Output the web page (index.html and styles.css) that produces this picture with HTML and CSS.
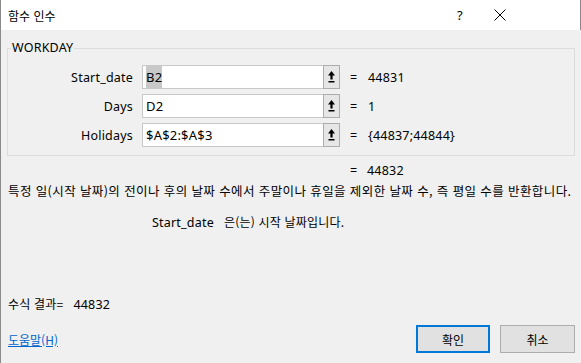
FILE: index.html
```html
<!DOCTYPE html>
<html lang="ko">
  <head>
    <meta charset="UTF-8">
    <title>함수 인수</title>
    <link rel="stylesheet" href="styles.css">
  </head>
  <body>
<div class="dialog">
  <div class="titlebar">
    <span class="title">함수 인수</span>
    <span class="help">?</span>
    <span class="close">
      <svg width="12" height="12" viewBox="0 0 12 12">
        <path d="M0.5 0.5 L11.5 11.5 M11.5 0.5 L0.5 11.5" stroke="#000" stroke-width="1" fill="none" />
      </svg>
    </span>
  </div>

  <div class="content">
    <fieldset class="group">
      <legend>WORKDAY</legend>
      <div class="args">
        <label>Start_date</label>
        <div class="field"><span class="sel">B2</span></div>
        <button class="collapse" type="button">
          <svg width="7" height="12" viewBox="0 0 7 12"><path d="M3.5 0 L7 4.5 L4.6 4.5 L4.6 8.5 L2.4 8.5 L2.4 4.5 L0 4.5 Z M0.5 10 L6.5 10 L6.5 11.5 L0.5 11.5 Z" fill="#000" /></svg>
        </button>
        <span class="eq">=</span>
        <span class="val">44831</span>

        <label>Days</label>
        <div class="field">D2</div>
        <button class="collapse" type="button">
          <svg width="7" height="12" viewBox="0 0 7 12"><path d="M3.5 0 L7 4.5 L4.6 4.5 L4.6 8.5 L2.4 8.5 L2.4 4.5 L0 4.5 Z M0.5 10 L6.5 10 L6.5 11.5 L0.5 11.5 Z" fill="#000" /></svg>
        </button>
        <span class="eq">=</span>
        <span class="val">1</span>

        <label>Holidays</label>
        <div class="field">$A$2:$A$3</div>
        <button class="collapse" type="button">
          <svg width="7" height="12" viewBox="0 0 7 12"><path d="M3.5 0 L7 4.5 L4.6 4.5 L4.6 8.5 L2.4 8.5 L2.4 4.5 L0 4.5 Z M0.5 10 L6.5 10 L6.5 11.5 L0.5 11.5 Z" fill="#000" /></svg>
        </button>
        <span class="eq">=</span>
        <span class="val">{44837;44844}</span>
      </div>
    </fieldset>

    <div class="result"><span class="eq">=</span><span class="val">44832</span></div>
    <p class="desc">특정 일(시작 날짜)의 전이나 후의 날짜 수에서 주말이나 휴일을 제외한 날짜 수, 즉 평일 수를 반환합니다.</p>
    <p class="argdesc"><span class="argname">Start_date</span>은(는) 시작 날짜입니다.</p>

    <div class="formula">수식 결과=<span class="formula-val">44832</span></div>

    <div class="footer">
      <a href="#" class="help-link">도움말(H)</a>
      <div class="buttons">
        <button class="btn ok" type="button">확인</button>
        <button class="btn" type="button">취소</button>
      </div>
    </div>
  </div>
</div>
  </body>
</html>
```

FILE: styles.css
```css
body {
  margin: 0;
  width: 581px;
  height: 363px;
  overflow: hidden;
  font: 12.5px "Noto Sans", "Noto Sans CJK KR", sans-serif;
  letter-spacing: 0.2px;
  color: #000;
  background: #f0f0f0;
}

.dialog {
  height: 363px;
  border-left: 1px solid #8a8a8a;
  display: flex;
  flex-direction: column;
}

.titlebar {
  height: 30px;
  background: #fff;
  display: flex;
  align-items: center;
  border-right: 1px solid #8a8a8a;
}
.title {
  margin-left: 7px;
  flex: 1;
  font-family: "Noto Sans CJK KR", sans-serif;
  font-size: 12px;
  letter-spacing: 0;
}
.help {
  width: 20px;
  margin-right: 24px;
  font-size: 13px;
  text-align: center;
}
.close {
  width: 12px;
  height: 12px;
  margin-right: 74px;
  display: flex;
}

.content {
  flex: 1;
  padding: 0 6px;
  display: flex;
  flex-direction: column;
}

.group {
  margin: 10px 0 0 0;
  padding: 9px 0 8px 0;
  border: 1px solid #dcdcdc;
  min-width: 0;
}
.group legend {
  padding: 0 1px;
  margin-left: 3px;
  line-height: 16px;
}

.args {
  display: grid;
  grid-template-columns: 134px 181px 17px 28px auto;
  grid-auto-rows: 24px;
  row-gap: 5px;
  align-items: center;
}
.args label {
  text-align: right;
  padding-right: 9px;
}
.field {
  height: 24px;
  box-sizing: border-box;
  background: #fff;
  border: 1px solid #c8c8c8;
  border-right: none;
  padding: 0 0 0 3px;
  line-height: 22px;
  font-size: 13px;
}
.sel {
  background: #c8c8c8;
  padding: 2px 0;
}
.collapse {
  height: 24px;
  width: 17px;
  padding: 0;
  margin: 0;
  box-sizing: border-box;
  background: #e6e6e6;
  border: 1px solid #adadad;
  display: flex;
  align-items: center;
  justify-content: center;
}
.eq {
  padding-left: 10px;
}

.result {
  margin-top: 6px;
  padding-left: 343px;
  display: flex;
}
.result .eq {
  width: 17px;
  padding-left: 0;
}

.desc {
  margin: 2px 0 0 1px;
  font-family: "Noto Sans CJK KR", sans-serif;
  font-size: 12.5px;
  letter-spacing: 0.4px;
  white-space: nowrap;
}

.argdesc {
  margin: 13px 0 0 145px;
  font-family: "Noto Sans CJK KR", sans-serif;
  font-size: 12px;
}
.argname {
  font-family: "Noto Sans", sans-serif;
  font-size: 12.5px;
  margin-right: 10px;
}

.formula {
  margin-top: auto;
  padding-left: 1px;
  font-family: "Noto Sans CJK KR", sans-serif;
  font-size: 12px;
}
.formula-val {
  font-family: "Noto Sans", sans-serif;
  font-size: 12.5px;
  margin-left: 10px;
}

.footer {
  display: flex;
  align-items: center;
  justify-content: space-between;
  margin: 12px 0 10px 0;
}
.help-link {
  margin-left: 1px;
  color: #0066cc;
  font-family: "Noto Sans CJK KR", sans-serif;
  font-size: 12px;
  letter-spacing: 0;
}
.buttons {
  display: flex;
  gap: 10px;
}
.btn {
  width: 75px;
  height: 28px;
  box-sizing: border-box;
  background: #e1e1e1;
  border: 1px solid #adadad;
  font: 12px "Noto Sans CJK KR", sans-serif;
  padding: 0;
}
.btn.ok {
  width: 74px;
  border: 2px solid #0078d7;
}
```
